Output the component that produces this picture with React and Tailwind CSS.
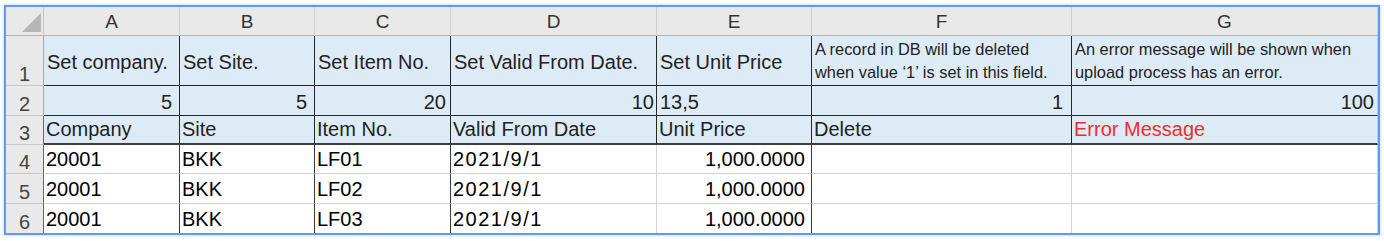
import React from "react"

const cols = [
  { id: "A", body: "border-r-[#3a3a3a]" },
  { id: "B", body: "border-r-[#3a3a3a]" },
  { id: "C", body: "border-r-[#3a3a3a]" },
  { id: "D", body: "border-r-[#d4d4d4]" },
  { id: "E", body: "border-r-[#3a3a3a]" },
  { id: "F", body: "border-r-[#d4d4d4]" },
  { id: "G", body: "border-r-[#d4d4d4]" },
]

const row1 = ["Set company.", "Set Site.", "Set Item No.", "Set Valid From Date.", "Set Unit Price"]

const row2 = [
  { v: "5", cls: "justify-end pr-[7px]" },
  { v: "5", cls: "justify-end pr-[7px]" },
  { v: "20", cls: "justify-end pr-[4px]" },
  { v: "10", cls: "justify-end pr-[2px]" },
  { v: "13,5", cls: "justify-start pl-[3px]" },
  { v: "1", cls: "justify-end pr-[8px]" },
  { v: "100", cls: "justify-end pr-[3px]" },
]

const row3 = ["Company", "Site", "Item No.", "Valid From Date", "Unit Price", "Delete", "Error Message"]

const records = [
  ["20001", "BKK", "LF01", "2021/9/1", "1,000.0000", "", ""],
  ["20001", "BKK", "LF02", "2021/9/1", "1,000.0000", "", ""],
  ["20001", "BKK", "LF03", "2021/9/1", "1,000.0000", "", ""],
]

const RowHead = ({ n, cls = "" }) => (
  <div className={ "flex justify-center items-end pb-[1px] bg-[#e9e9e9] border-r border-b border-b-[#c8c8c8] text-[20px] leading-none text-[#444] " + cls }>
    { n }
  </div>
)

const Blue = ({ children, size = "text-[20px]", line = "border-r-[#262626]", cls = "" }) => (
  <div className={ "flex bg-[#ddebf7] border-r text-[#222] whitespace-nowrap overflow-hidden " + size + " " + line + " " + cls }>
    { children }
  </div>
)

export default function App() {
  return (
    <div className="bg-white pt-[5px] pl-[4px] pr-[4px] pb-[6px]" style={{ fontFamily: "'Liberation Sans', Arial, sans-serif" }}>
      <div className="border-2 border-[#5b9cf0] shadow-[0_0_3px_#a9cbf6]">
        <div className="grid grid-cols-[38px_136px_135px_136px_206px_155px_260px_306px] grid-rows-[29px_50px_30px_29px_29px_30px_29px]">

          {/* column headers */}
          <div className="relative bg-[#e9e9e9] border-r border-r-[#c2c2c2] border-b border-b-[#b4b4b4]">
            <svg className="absolute left-[16px] top-[6px]" width="19" height="19" viewBox="0 0 19 19">
              <polygon points="19,0 19,19 0,19" fill="#b7b7b7" />
            </svg>
          </div>
          { cols.map(c => (
            <div key={ c.id } className="flex justify-center items-center bg-[#e9e9e9] border-r border-r-[#cfcfcf] border-b border-b-[#b4b4b4] text-[19px] leading-none text-[#333]">
              { c.id }
            </div>
          )) }

          {/* row 1 */}
          <RowHead n="1" cls="border-r-[#a8a8a8]" />
          { row1.map((t, i) => (
            <Blue key={ i } cls="items-center pl-[3px] pt-[3px] border-b border-b-[#262626]">{ t }</Blue>
          )) }
          <Blue size="text-[16.4px] leading-[23px]" cls="flex-col justify-center pl-[3px] pt-[1px] border-b border-b-[#262626]">
            <span>A record in DB will be deleted</span>
            <span>when value ‘1’ is set in this field.</span>
          </Blue>
          <Blue size="text-[16.4px] leading-[23px]" line="border-r-[#c8c8c8]" cls="flex-col justify-center pl-[3px] pt-[1px] border-b border-b-[#262626]">
            <span>An error message will be shown when</span>
            <span>upload process has an error.</span>
          </Blue>

          {/* row 2 */}
          <RowHead n="2" cls="border-r-[#a8a8a8]" />
          { row2.map((c, i) => (
            <Blue key={ i } line={ i === 6 ? "border-r-[#c8c8c8]" : "border-r-[#262626]" } cls={ "items-end pb-[3px] leading-none border-b border-b-[#262626] " + c.cls }>
              { c.v }
            </Blue>
          )) }

          {/* row 3 */}
          <RowHead n="3" cls="border-r-[#6a6a6a]" />
          { row3.map((t, i) => (
            <Blue key={ i } line={ i === 6 ? "border-r-[#c8c8c8]" : "border-r-[#262626]" } cls={ "items-end pl-[2px] pb-[4px] leading-none border-b-2 border-b-[#404040]" + (i === 6 ? " !text-[#f22b2b]" : "") }>
              { t }
            </Blue>
          )) }

          {/* rows 4-6 */}
          { records.map((r, ri) => (
            <React.Fragment key={ ri }>
              <RowHead n={ String(ri + 4) } cls={ "border-r-[#6a6a6a]" + (ri === 2 ? " border-b-0" : "") } />
              { r.map((v, i) => (
                <div key={ i } className={ "flex items-end pb-[4px] leading-none text-[20px] text-black whitespace-nowrap bg-white border-r " + cols[i].body + (ri === 2 ? "" : " border-b border-b-[#d4d4d4]") + (i === 4 ? " justify-end pr-[6px]" : " pl-[2px]") + (i === 3 ? " tracking-[1.5px]" : "") }>
                  { v }
                </div>
              )) }
            </React.Fragment>
          )) }
        </div>
      </div>
    </div>
  )
}
